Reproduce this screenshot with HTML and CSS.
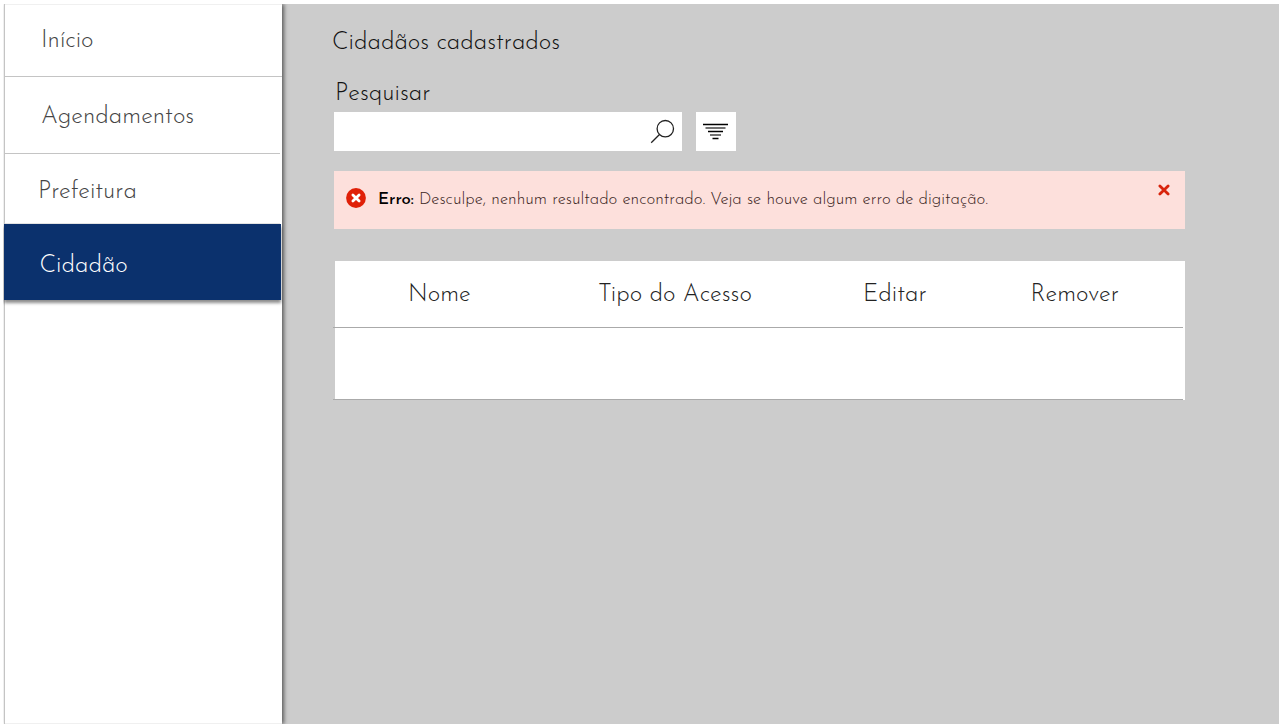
FILE: index.html
```html
<!DOCTYPE html>
<html lang="pt-BR">
<head>
<meta charset="utf-8">
<title>Cidadãos cadastrados</title>
<link rel="stylesheet" href="styles.css">
</head>
<body>
<div class="app">
  <nav class="sidebar">
    <a class="nav-item nav-inicio"><span>Início</span></a>
    <a class="nav-item nav-agenda"><span>Agendamentos</span></a>
    <a class="nav-item nav-prefeitura"><span>Prefeitura</span></a>
    <a class="nav-item nav-cidadao"><span>Cidadão</span></a>
  </nav>
  <main class="content">
    <h1 class="title"><span>Cidadãos cadastrados</span></h1>
    <label class="search-label"><span>Pesquisar</span></label>
    <div class="search-row">
      <div class="search-box">
        <svg class="search-icon" width="26" height="26" viewBox="0 0 26 26" fill="none" stroke="#222" stroke-width="1.3"><circle cx="15.3" cy="9.7" r="8.2"/><path d="M9.5 15.5 1.2 23.8"/></svg>
      </div>
      <div class="filter-button">
        <svg width="40" height="39" viewBox="0 0 40 39" fill="none"><path d="M7 12.5h25M12 19.5h15M16.5 26.5h6" stroke="#000" stroke-width="1.3"/><path d="M9.5 16h20M14 23h11" stroke="#444" stroke-width="1.6"/></svg>
      </div>
    </div>
    <div class="alert">
      <svg class="error-icon" width="20" height="20" viewBox="0 0 20 20"><circle cx="10" cy="10" r="9.9" fill="#e02008"/><path d="m6.9 6.9 6.2 6.2m0-6.2-6.2 6.2" stroke="#fff" stroke-width="2.8" stroke-linecap="round"/></svg>
      <p class="alert-text"><strong>Erro:</strong> <span>Desculpe, nenhum resultado encontrado. Veja se houve algum erro de digitação.</span></p>
      <svg class="close-icon" width="12" height="12" viewBox="0 0 12 12"><path d="m1.9 1.9 8.2 8.2m0-8.2-8.2 8.2" stroke="#d8240c" stroke-width="2.8" stroke-linecap="round"/></svg>
    </div>
    <div class="table">
      <div class="table-head">
        <span class="col-nome">Nome</span>
        <span class="col-tipo">Tipo do Acesso</span>
        <span class="col-editar">Editar</span>
        <span class="col-remover">Remover</span>
      </div>
      <div class="table-row"></div>
    </div>
  </main>
</div>
</body>
</html>
```
FILE: styles.css
```css
* { box-sizing: border-box; }
body {
  margin: 0;
  background: #fff;
  color: #222;
  font: 300 24px/30px "Josefin Sans", Lato, sans-serif;
}
.app { display: flex; height: 728px; padding: 4px 0 4px 4px; overflow: hidden; }
.sidebar {
  position: relative;
  width: 278px;
  flex: none;
  background: #fff;
  border-left: 1px solid #c4c4c4;
  box-shadow: 2px 0 4px rgba(0,0,0,.55), inset 0 1px #f0f0f0, inset 0 -1px #f0f0f0;
  clip-path: inset(0 -8px 0 -1px);
}
.nav-item { display: block; color: #444; white-space: nowrap; border-bottom: 1px solid #c4c4c4; }
.nav-inicio { height: 73px; padding: 22px 0 0 36px; }
.nav-agenda { height: 77px; margin-right: 2px; padding: 25px 0 0 36px; }
.nav-prefeitura { height: 70px; margin-right: 2px; padding: 23px 0 0 33px; border-color: #e4e4e4; }
.nav-cidadao {
  height: 76px;
  margin: 0 1px 0 -1px;
  padding: 27px 0 0 35.5px;
  border: 0;
  background: #0b316d;
  color: #fff;
  box-shadow: 0 3px 3px rgba(0,0,0,.45);
}
.content { flex: 1; padding: 24px 0 0 51px; background: #ccc; }
.title { margin: 0 0 21px -1px; font: inherit; color: #111; }
.search-label { display: block; padding-left: 2px; color: #111; }
.search-row { display: flex; gap: 14px; margin: 3px 0 20px 1px; }
.search-box { display: flex; justify-content: flex-end; width: 348px; height: 39px; padding: 7px 6px 0 0; background: #fff; }
.filter-button { width: 40px; height: 39px; background: #fff; }
.alert { display: flex; width: 851px; height: 58px; margin-left: 1px; padding: 0 15px 0 12px; background: #fde0dc; }
.error-icon { margin-top: 17px; }
.alert-text { flex: 1; margin: 19px 0 0 12px; font-size: 16.8px; line-height: 20px; color: #3a2422; white-space: nowrap; }
.alert-text strong { font-weight: 500; color: #000; }
.close-icon { margin-top: 13px; }
.table { width: 850px; height: 139px; margin: 32px 0 0 2px; background: #fff; }
.table-head, .table-row { width: 850px; margin-left: -2px; border-bottom: 1px solid #aaa; }
.table-head { display: flex; height: 67px; padding-top: 19px; }
.table-head span { flex: none; white-space: nowrap; }
.table-row { height: 72px; }
.col-nome { width: 190px; margin-left: 75px; }
.col-tipo { width: 265px; }
.col-editar { width: 167.5px; }
```
